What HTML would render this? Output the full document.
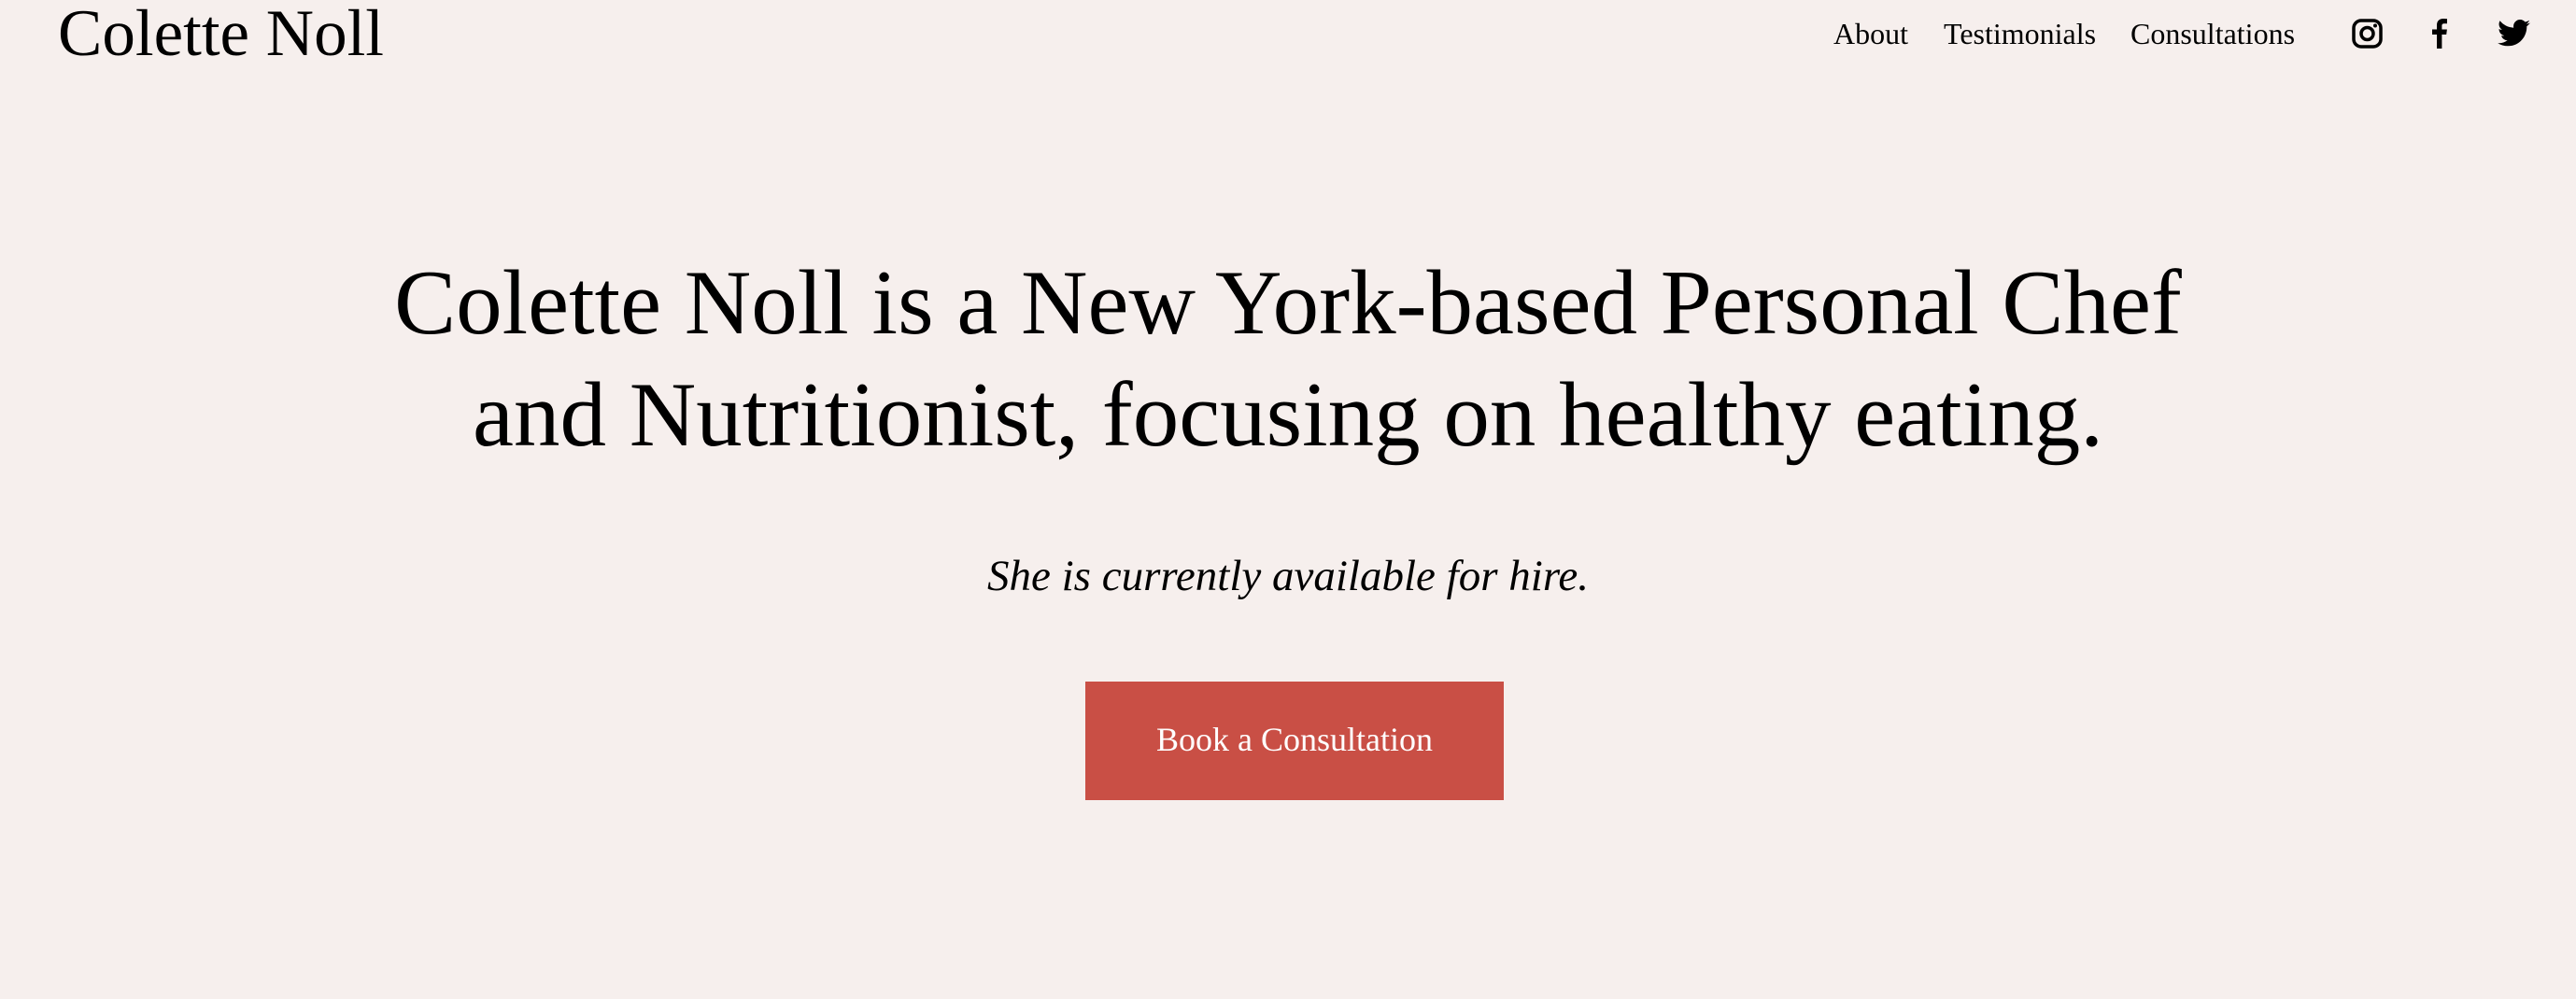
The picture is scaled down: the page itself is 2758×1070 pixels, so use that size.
<!DOCTYPE html>
<html><head><meta charset="utf-8"><style>
html,body{margin:0;padding:0}
body{width:2758px;height:1070px;background:#f6efed;position:relative;overflow:hidden;font-family:"Liberation Serif",serif;color:#000}
.a{position:absolute;white-space:nowrap}
.logo{left:62px;top:-4px;font-size:71px;line-height:80px}
.nav{top:16px;font-size:32px;line-height:40px}
.h{left:0;width:2758px;text-align:center;font-size:99px;line-height:120px}
.sub{left:0;width:2758px;text-align:center;top:589px;font-size:47px;line-height:56px;font-style:italic}
.btn{left:1162px;top:730px;width:448px;height:127px;background:#c94f45}
.bt{left:1162px;width:448px;text-align:center;top:772px;font-size:36px;line-height:40px;color:#fff}
</style></head><body>
<div class="a logo">Colette Noll</div>
<div class="a nav" style="left:1963px">About</div>
<div class="a nav" style="left:2081px">Testimonials</div>
<div class="a nav" style="left:2281px">Consultations</div>
<svg class="a" style="left:2518px;top:20px" width="34" height="32" viewBox="0 0 34 32"><rect x="2" y="2" width="29" height="28" rx="8" fill="none" stroke="#000" stroke-width="3.5"/><circle cx="16.5" cy="16" r="6.5" fill="none" stroke="#000" stroke-width="3.5"/><circle cx="25" cy="7.5" r="2" fill="#000"/></svg>
<svg class="a" style="left:2604px;top:20px" width="17" height="32" viewBox="0 0 17 32"><path d="M5 32V17H0v-5.5h5V7c0-4.5 2.7-7 6.8-7 2 0 3.7.2 4.2.2v5h-2.9c-2.3 0-2.7 1.1-2.7 2.6v3.7h5.5l-.7 5.5H10.4V32z" fill="#000"/></svg>
<svg class="a" style="left:2674px;top:21px" width="35" height="29" viewBox="0 0 24 20"><path d="M24 2.4c-.9.4-1.8.6-2.8.8 1-.6 1.8-1.600 2.2-2.7-1 .6-2 1-3.1 1.2C19.4.7 18.1 0 16.6 0c-2.7 0-4.9 2.2-4.9 4.9 0 .4 0 .8.1 1.1C7.7 5.8 4.1 3.9 1.7.9c-.4.7-.7 1.6-.7 2.5 0 1.7.9 3.2 2.2 4.1-.8 0-1.6-.2-2.2-.6v.1c0 2.4 1.7 4.4 3.900 4.800-.4.1-.8.2-1.3.2-.3 0-.6 0-.9-.1.6 2 2.4 3.4 4.6 3.4-1.7 1.3-3.8 2.1-6.1 2.1-.4 0-.8 0-1.200-.1 2.2 1.4 4.8 2.2 7.5 2.2 9.1 0 14-7.5 14-14v-.6c1-.7 1.8-1.6 2.5-2.5z" fill="#000"/></svg>
<div class="a h" style="top:265px">Colette Noll is a New York-based Personal Chef</div>
<div class="a h" style="top:385px">and Nutritionist, focusing on healthy eating.</div>
<div class="a sub">She is currently available for hire.</div>
<div class="a btn"></div>
<div class="a bt">Book a Consultation</div>
</body></html>
